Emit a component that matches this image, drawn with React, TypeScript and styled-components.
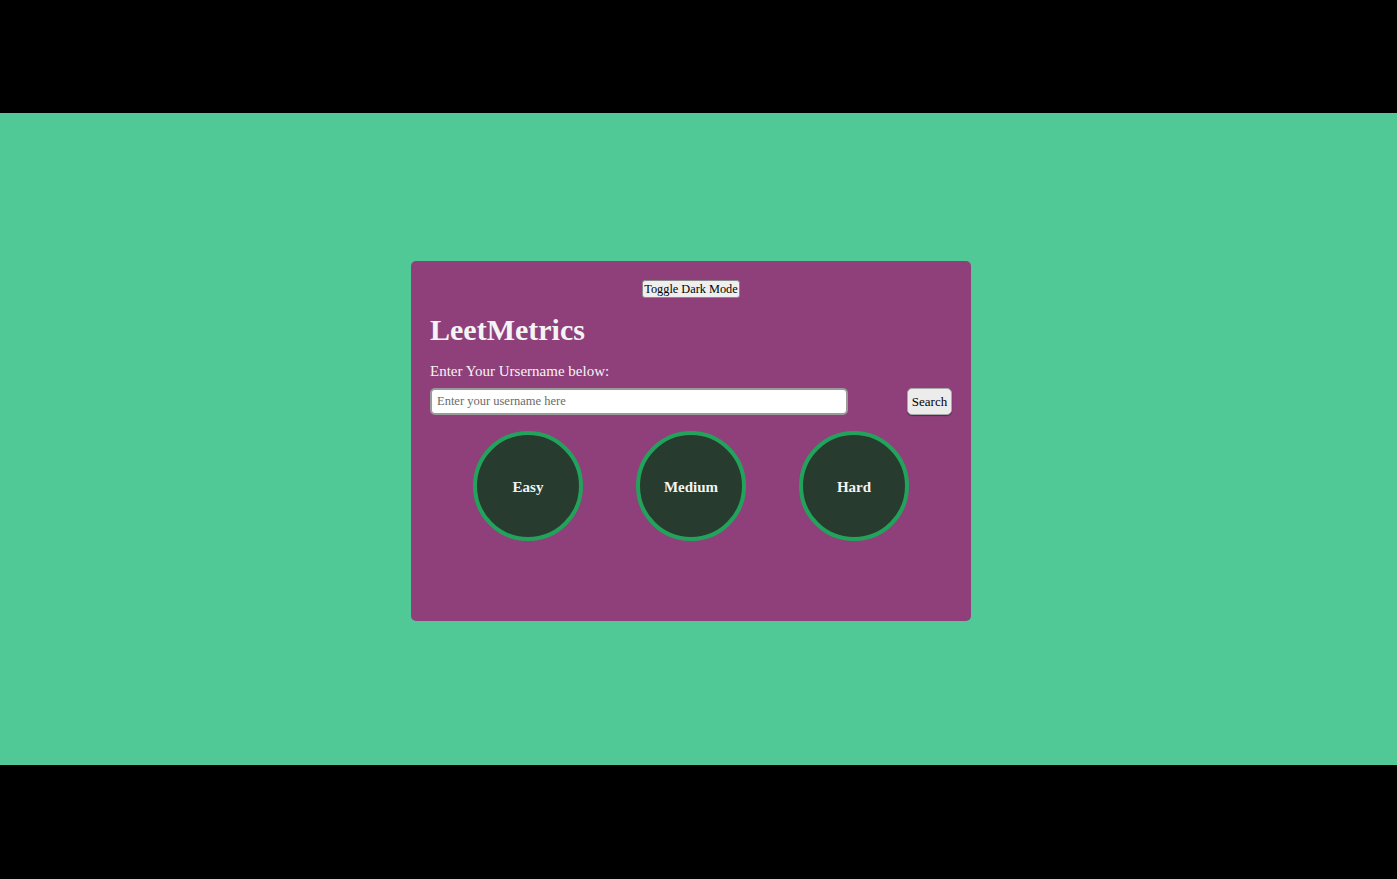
import React from "react";
import styled, { createGlobalStyle } from "styled-components";

const Global = createGlobalStyle`
  html, body { margin: 0; padding: 0; background: #000; }
  body { font-family: "Liberation Serif", "Times New Roman", serif; }
`;

const Page = styled.div`
  display: flex;
  flex-direction: column;
  height: 879px;
  background: #000;
`;

const Band = styled.div<{ $h: number }>`
  height: ${(p) => p.$h}px;
  flex: none;
  background: #000;
`;

const Stage = styled.main`
  height: 652px;
  flex: none;
  background: #50c997;
  display: flex;
  align-items: center;
  justify-content: center;
  padding: 4px 15px 0 0;
  box-sizing: border-box;
`;

const Card = styled.section`
  width: 560px;
  height: 360px;
  box-sizing: border-box;
  background: #8f407b;
  border-radius: 5px;
  padding: 19px 19px 0 19px;
  display: flex;
  flex-direction: column;
  color: #f2f2f2;
`;

const ToggleButton = styled.button`
  align-self: center;
  font-family: "Liberation Serif", serif;
  font-size: 12.3px;
  color: #000;
  background: #efefef;
  border: 1px solid #8a8a8a;
  border-radius: 3px;
  padding: 0 1px;
  height: 18px;
  line-height: 14px;
`;

const Title = styled.h1`
  margin: 14px 0 0 0;
  font-size: 30px;
  font-weight: bold;
  line-height: 35px;
  color: #f4f4f4;
`;

const Label = styled.p`
  margin: 16px 0 0 0;
  font-size: 15px;
  line-height: 17px;
  color: #f4f4f4;
`;

const SearchRow = styled.div`
  display: flex;
  justify-content: space-between;
  align-items: center;
  margin-top: 8px;
  height: 27px;
`;

const Input = styled.input`
  width: 418px;
  height: 27px;
  box-sizing: border-box;
  border: 2px solid #9a9a9a;
  border-radius: 5px;
  background: #fff;
  font-family: "Liberation Serif", serif;
  font-size: 12.5px;
  padding: 0 5px;
  &::placeholder { color: #6b6b6b; }
`;

const SearchButton = styled.button`
  width: 45px;
  height: 27px;
  box-sizing: border-box;
  border: 1px solid #aaa;
  border-radius: 5px;
  background: #ececec;
  box-shadow: 0 1px 1px rgba(0,0,0,0.4);
  font-family: "Liberation Serif", serif;
  font-size: 13px;
  color: #000;
  padding: 0;
`;

const Circles = styled.div`
  display: flex;
  justify-content: center;
  gap: 53px;
  margin-top: 16px;
`;

const Circle = styled.div`
  width: 110px;
  height: 110px;
  box-sizing: border-box;
  border-radius: 50%;
  border: 4px solid #22a35c;
  background: #283b2f;
  display: flex;
  align-items: center;
  justify-content: center;
  padding-top: 3px;
  font-weight: bold;
  font-size: 15px;
  color: #f4f4f4;
`;

export default function App() {
  return (
    <>
      <Global />
      <Page>
        <Band $h={113} />
        <Stage>
          <Card>
            <ToggleButton>Toggle Dark Mode</ToggleButton>
            <Title>LeetMetrics</Title>
            <Label>Enter Your Ursername below:</Label>
            <SearchRow>
              <Input placeholder="Enter your username here" />
              <SearchButton>Search</SearchButton>
            </SearchRow>
            <Circles>
              <Circle>Easy</Circle>
              <Circle>Medium</Circle>
              <Circle>Hard</Circle>
            </Circles>
          </Card>
        </Stage>
        <Band $h={114} />
      </Page>
    </>
  );
}
